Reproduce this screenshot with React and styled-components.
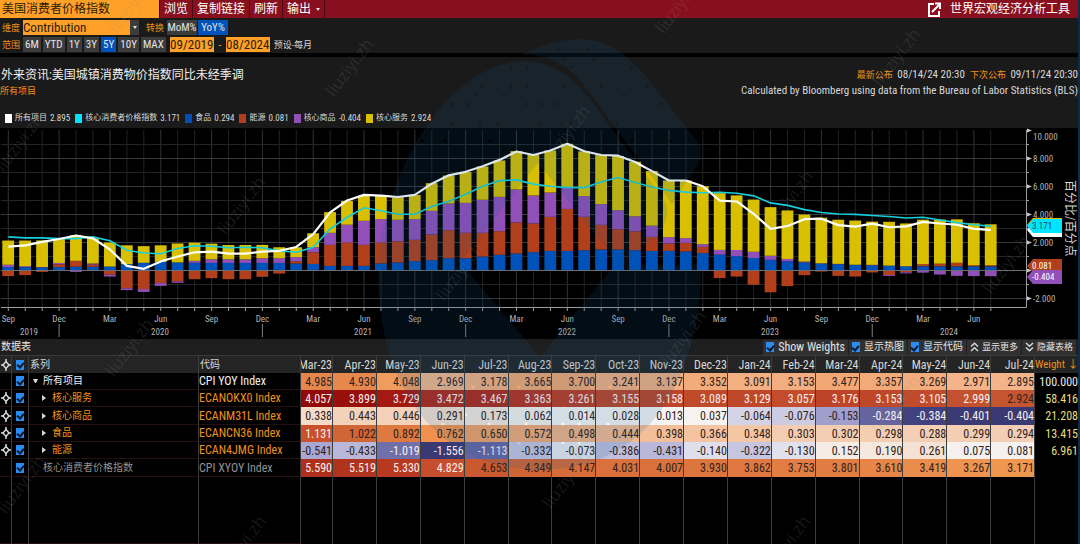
import { useState } from "react";
import styled, { createGlobalStyle } from "styled-components";

const latin = '"Roboto Condensed", Roboto, "Noto Sans CJK SC", sans-serif';

const GlobalStyle = createGlobalStyle`
  * {
    box-sizing: border-box;
  }
  body {
    margin: 0;
    background: #000;
    color: #d8d8d8;
    font-family: ${latin};
    font-size: 12px;
    line-height: 16px;
  }
  button, input, select {
    font-family: inherit;
    line-height: inherit;
    margin: 0;
  }
`;

const ranges = ["6M", "YTD", "1Y", "3Y", "5Y", "10Y", "MAX"];

const legend = [
  { name: "所有项目", value: "2.895", color: "#ffffff" },
  { name: "核心消费者价格指数", value: "3.171", color: "#00e5ff" },
  { name: "食品", value: "0.294", color: "#0050b8" },
  { name: "能源", value: "0.081", color: "#b23f1c" },
  { name: "核心商品", value: "-0.404", color: "#9050b8" },
  { name: "核心服务", value: "2.924", color: "#d8c000" },
];

// food, energy, core goods, core services
const stacks = [
  [0.24, -0.4, 0.17, 1.73], [0.24, -0.33, 0.06, 1.84], [0.22, -0.1, 0.03, 1.9], [0.24, 0.2, 0.1, 1.73],
  [0.27, 0.42, -0.1, 1.83], [0.27, 0.15, 0.08, 1.8], [0.28, -0.3, -0.13, 1.72], [0.45, -1.27, -0.13, 1.35],
  [0.55, -1.33, -0.2, 1.19], [0.62, -0.9, -0.2, 1.18], [0.58, -0.78, -0.1, 1.35], [0.55, -0.62, 0.14, 1.3],
  [0.54, -0.55, 0.26, 1.12], [0.54, -0.62, 0.26, 1.02], [0.54, -0.62, 0.26, 1.02], [0.54, -0.45, 0.34, 0.95],
  [0.54, -0.22, 0.34, 0.78], [0.5, 0.16, 0.3, 0.7], [0.47, 0.83, 0.36, 1.0], [0.33, 1.5, 0.86, 1.48],
  [0.33, 1.67, 1.27, 1.7], [0.33, 1.5, 1.72, 1.8], [0.5, 1.5, 1.67, 1.7], [0.57, 1.52, 1.53, 1.62],
  [0.67, 1.52, 1.48, 1.73], [0.74, 1.83, 1.69, 1.98], [0.88, 2.0, 1.9, 2.0], [0.88, 1.81, 2.14, 2.2],
  [1.0, 1.69, 2.36, 2.38], [1.12, 1.69, 2.45, 2.6], [1.21, 2.22, 2.36, 2.74], [1.31, 2.05, 2.0, 2.9],
  [1.4, 2.43, 1.74, 3.0], [1.4, 3.0, 1.5, 3.15], [1.45, 2.38, 1.48, 3.2], [1.5, 1.76, 1.48, 3.5],
  [1.5, 1.45, 1.36, 3.87], [1.45, 1.35, 1.07, 3.9], [1.4, 1.0, 0.8, 3.9], [1.4, 0.53, 0.45, 4.05],
  [1.36, 0.62, 0.33, 4.12], [1.24, 0.45, 0.19, 4.14],
  [1.131, -0.541, 0.338, 4.057], [1.022, -0.433, 0.443, 3.899], [0.892, -1.019, 0.446, 3.729],
  [0.762, -1.556, 0.291, 3.472], [0.65, -1.113, 0.173, 3.467], [0.572, -0.332, 0.062, 3.363],
  [0.498, -0.073, 0.014, 3.261], [0.444, -0.386, 0.028, 3.155], [0.398, -0.431, 0.013, 3.158],
  [0.366, -0.14, 0.037, 3.089], [0.348, -0.322, -0.064, 3.129], [0.303, -0.13, -0.076, 3.057],
  [0.302, 0.152, -0.153, 3.176], [0.298, 0.19, -0.284, 3.153], [0.288, 0.261, -0.384, 3.105],
  [0.299, 0.075, -0.401, 2.999], [0.294, 0.081, -0.404, 2.924],
];

const headline = [
  1.7, 1.8, 2.05, 2.25, 2.5, 2.3, 1.5, 0.33, 0.12, 0.65, 1.0, 1.3, 1.35, 1.2, 1.2, 1.35, 1.4, 1.68, 2.6,
  4.15, 5.0, 5.4, 5.35, 5.25, 5.4, 6.2, 6.8, 7.05, 7.45, 7.9, 8.5, 8.25, 8.57, 9.05, 8.52, 8.25, 8.2, 7.75,
  7.1, 6.43, 6.43, 6.02, 4.985, 4.93, 4.048, 2.969, 3.178, 3.665, 3.7, 3.241, 3.137, 3.352, 3.091, 3.153,
  3.477, 3.357, 3.269, 2.971, 2.895,
];

const core = [
  2.4, 2.33, 2.33, 2.28, 2.28, 2.4, 2.12, 1.45, 1.25, 1.2, 1.57, 1.77, 1.73, 1.63, 1.66, 1.62, 1.4, 1.3,
  1.66, 2.97, 3.8, 4.48, 4.27, 4.02, 4.02, 4.57, 4.95, 5.45, 6.02, 6.42, 6.47, 6.17, 6.02, 5.92, 5.92,
  6.32, 6.64, 6.28, 5.97, 5.72, 5.6, 5.55, 5.59, 5.519, 5.33, 4.829, 4.653, 4.349, 4.147, 4.031, 4.007,
  3.93, 3.862, 3.753, 3.801, 3.61, 3.419, 3.267, 3.171,
];

const months = [
  "Mar-23", "Apr-23", "May-23", "Jun-23", "Jul-23", "Aug-23", "Sep-23", "Oct-23", "Nov-23", "Dec-23",
  "Jan-24", "Feb-24", "Mar-24", "Apr-24", "May-24", "Jun-24", "Jul-24",
];

const rows = [
  {
    name: "所有项目", code: "CPI YOY Index", weight: "100.000", tone: "#f0f0f0", level: 0, mark: "down",
    values: "4.985 4.930 4.048 2.969 3.178 3.665 3.700 3.241 3.137 3.352 3.091 3.153 3.477 3.357 3.269 2.971 2.895",
    heat: "#e5864c #e6884d #f19c5f #f4b58c #f3b083 #f1a774 #f1a673 #f3ae80 #f3b083 #f2ac7b #f3b083 #f2ae80 #f2a875 #f2aa79 #f3ad7d #f4b388 #f4b48a",
    light: 0,
  },
  {
    name: "核心服务", code: "ECANOKX0 Index", weight: "58.416", tone: "#f0901c", level: 1, mark: "right", pin: true,
    values: "4.057 3.899 3.729 3.472 3.467 3.363 3.261 3.155 3.158 3.089 3.129 3.057 3.176 3.153 3.105 2.999 2.924",
    heat: "#900a0a #980f0c #a31a12 #b0281b #b0281b #b83220 #bd3d24 #be4528 #be4528 #c04b2a #bf482a #c24c2b #bd4428 #be4629 #c04a2a #c3502e #c55530",
    light: 16,
  },
  {
    name: "核心商品", code: "ECANM31L Index", weight: "21.208", tone: "#f0901c", level: 1, mark: "right", pin: true,
    values: "0.338 0.443 0.446 0.291 0.173 0.062 0.014 0.028 0.013 0.037 -0.064 -0.076 -0.153 -0.284 -0.384 -0.401 -0.404",
    heat: "#f5dcc8 #f3d2ba #f3d2b9 #f5e0d0 #f6e9df #f7f2ee #f7f6f5 #f7f5f4 #f5f4f4 #f5f2f0 #d3d2e6 #cccbe2 #a09fcb #65649f #424180 #3c3a75 #3b3974",
    light: 0,
  },
  {
    name: "食品", code: "ECANCN36 Index", weight: "13.415", tone: "#f0901c", level: 1, mark: "right", pin: true,
    values: "1.131 1.022 0.892 0.762 0.650 0.572 0.498 0.444 0.398 0.366 0.348 0.303 0.302 0.298 0.288 0.299 0.294",
    heat: "#c9502b #d06535 #de793f #f0924e #f1a066 #f2a977 #f3b387 #f3ba92 #f3bf9a #f3c3a2 #f3c6a6 #f3cdb2 #f3cdb2 #f3ceb3 #f4cfb5 #f3ceb3 #f3ceb4",
    light: 1,
  },
  {
    name: "能源", code: "ECAN4JMG Index", weight: "6.961", tone: "#f0901c", level: 1, mark: "right", pin: true,
    values: "-0.541 -0.433 -1.019 -1.556 -1.113 -0.332 -0.073 -0.386 -0.431 -0.140 -0.322 -0.130 0.152 0.190 0.261 0.075 0.081",
    heat: "#a9a8d2 #b9b8da #706fa9 #3b3974 #6665a3 #c6c5e1 #eaeaf1 #c0bfde #b9b8da #dfdfeb #c7c6e1 #e1e1ed #f4ece5 #f5e8de #f4e2d4 #f5f1ee #f5f1ee",
    light: 0,
  },
  {
    name: "核心消费者价格指数", code: "CPI XYOY Index", weight: "", tone: "#929292", level: 0,
    values: "5.590 5.519 5.330 4.829 4.653 4.349 4.147 4.031 4.007 3.930 3.862 3.753 3.801 3.610 3.419 3.267 3.171",
    heat: "#ae2f1b #b0331d #b83820 #c74e2c #cb5930 #d16435 #d76c39 #da713c #da713c #dc753e #df7941 #e27e44 #e17c43 #e68547 #ea8c4c #ee9350 #f0974f",
    light: 4,
  },
];

const whiteText = (row, i, value) => {
  if (i < row.light) return true;
  return row.level === 1 && (row.name === "核心商品" ? value < -0.2 : value < -1);
};

const toY = (v) => 142.5 - v * 14;
const toX = (i) => 8.3 + i * 16.94;
const barColors = ["#0052bb", "#b23f1c", "#9050b8", "#d8c000"];
const monthNames = ["Sep", "Dec", "Mar", "Jun"];
const linePoints = (list) => list.map((v, i) => `${toX(i)},${toY(v)}`).join(" ");

const Bars = () =>
  stacks.map((parts, i) => {
    let up = 0;
    let down = 0;
    return parts.map((v, k) => {
      const from = v >= 0 ? up : down;
      const to = from + v;
      if (v >= 0) up = to;
      else down = to;
      return (
        <rect
          key={`${i}-${k}`}
          x={toX(i) - 6}
          y={toY(Math.max(from, to))}
          width="11.8"
          height={Math.abs(v) * 14}
          fill={barColors[k]}
        />
      );
    });
  });

const Tag = ({ y, color, ink, label }) => (
  <g>
    <path d={`M1027 ${y}L1033 ${y - 7}H1062V${y + 7}H1033Z`} fill={color} />
    {label && <text x="1032" y={y + 3} fill={ink} fontSize="9">{label}</text>}
  </g>
);

const Chart = () => (
  <ChartSvg viewBox="0 0 1080 210" role="img">
    {stacks.map((_, i) => (
      <line key={i} x1={toX(i)} x2={toX(i)} y1="2" y2="179" stroke={i % 3 === 0 ? "#303334" : "#202223"} />
    ))}
    {[-2, -1, 0, 1, 2, 3, 4, 5, 6, 7, 8, 9].map((v) => (
      <line key={v} x1="1" x2="1026" y1={toY(v)} y2={toY(v)} stroke={v % 2 === 0 ? "#363939" : "#232525"} />
    ))}
    <Bars />
    <line x1="1" x2="1026" y1={toY(0)} y2={toY(0)} stroke="#6c7070" />
    <polyline points={linePoints(core)} fill="none" stroke="#14d0dc" strokeWidth="1.6" />
    <polyline points={linePoints(headline)} fill="none" stroke="#fff" strokeWidth="2.2" strokeLinejoin="round" />
    <path d="M1 179.5H1026.5V2" fill="none" stroke="#9c9c9c" />
    {stacks.map((_, i) => (
      <g key={i}>
        <line x1={toX(i)} x2={toX(i)} y1="180" y2="183" stroke="#9c9c9c" />
        {i % 3 === 0 && (
          <AxisText x={toX(i)} y="194" textAnchor="middle">{monthNames[(i / 3) % 4]}</AxisText>
        )}
      </g>
    ))}
    {[3, 15, 27, 39, 51].map((i) => (
      <line key={i} x1={toX(i)} x2={toX(i)} y1="196" y2="209" stroke="#808080" />
    ))}
    {[["2019", 29], ["2020", 160], ["2021", 363], ["2022", 567], ["2023", 770], ["2024", 949]].map(([year, x]) => (
      <AxisText key={year} x={x} y="207" textAnchor="middle">{year}</AxisText>
    ))}
    {[-2, 0, 2, 4, 6, 8, 10].map((v) => (
      <g key={v}>
        <path d={`M1027 ${toY(v) - 2}L1032 ${toY(v)}L1027 ${toY(v) + 2}Z`} fill="#c8c8c8" />
        {v !== 0 && (
          <AxisText x="1033" y={v === 10 ? toY(v) + 9 : toY(v) + 3}>{v.toFixed(3)}</AxisText>
        )}
      </g>
    ))}
    {[-1, 1, 3, 5, 7, 9].map((v) => (
      <line key={v} x1="1026" x2="1029" y1={toY(v)} y2={toY(v)} stroke="#9c9c9c" />
    ))}
    <Tag y={97} color="#d8c000" />
    <Tag y={102} color="#fff" />
    <Tag y={98} color="#00e5ff" ink="#17494e" label="3.171" />
    <Tag y={138} color="#b23f1c" ink="#fff" label="0.081" />
    <Tag y={149} color="#9050b8" ink="#fff" label="-0.404" />
    <SideText x="1066" y="52">百分比/百分点</SideText>
  </ChartSvg>
);

const Pin = () => (
  <svg width="10" height="12" viewBox="0 0 10 12" fill="none" stroke="#d8d8d8">
    <path d="M5 2.6L8 6L5 9.4L2 6Z" strokeWidth="1.5" />
    <path d="M5 0V3M5 9V12M0 6H2M8 6H10" strokeWidth="1.5" />
  </svg>
);

const Chevrons = ({ down }) => (
  <svg width="9" height="10" viewBox="0 0 9 10" fill="none" stroke="#d8d8d8" strokeWidth="1.5">
    {down ? <path d="M1 1L4.5 4.3L8 1M1 5.5L4.5 8.8L8 5.5" /> : <path d="M1 4.5L4.5 1.2L8 4.5M1 9L4.5 5.7L8 9" />}
  </svg>
);

const stamps = [
  [133, 5], [350, 68], [567, 135], [790, 200], [1007, 265], [680, 5], [897, 58], [20, 143], [242, 206],
  [460, 272], [683, 340], [897, 405], [130, 348], [567, 480], [787, 545], [22, 485], [243, 545],
];

const dots = [
  [558, 50], [588, 50], [565, 59], [594, 59], [571, 67], [631, 67], [511, 67], [527, 67], [482, 86], [511, 86],
  [527, 86], [564, 86], [601, 86], [647, 86], [475, 95], [504, 95], [624, 95], [452, 104], [468, 104],
  [527, 104], [542, 104], [557, 104], [661, 104], [452, 123], [480, 123], [498, 123], [541, 123], [571, 123],
  [617, 123], [422, 141], [445, 141], [490, 141], [572, 141], [632, 141], [670, 141],
];

const Watermark = () => (
  <Overlay viewBox="0 0 1080 544" aria-hidden="true">
    <mask id="holes">
      <rect width="1080" height="544" fill="#fff" />
      {dots.map(([x, y]) => (
        <g key={`${x}-${y}`}>
          <circle cx={x} cy={y} r="1.6" />
          <circle cx={1090 - x} cy={510 - y} r="1.6" />
        </g>
      ))}
    </mask>
    <g fill="#105890" fillOpacity="0.15" mask="url(#holes)">
      <path
        fillRule="evenodd"
        d="M378 270C383 170 450 61 525 61C570 63 588 96 618 137L664 200Q674 215 656 236L627 265H701C700 385 645 470 540 470C440 470 377 390 378 270ZM538 163L460 262L540 357L617 262Z"
      />
      <path d="M520 55C580 29 608 34 645 75L697 141Q705 152 698 164L672 204L585 87Q560 52 520 55Z" />
    </g>
    {stamps.map(([x, y]) => (
      <text key={`${x}-${y}`} transform={`translate(${x} ${y}) rotate(-53)`} textAnchor="middle" dy="5">
        liuziyi.zh
      </text>
    ))}
    <rect x="1078" width="2" height="544" fill="#0d2c48" />
  </Overlay>
);

const App = () => {
  const [range, setRange] = useState("5Y");
  const [change, setChange] = useState("YoY%");

  return (
    <Page>
      <GlobalStyle />
      <TopBar>
        <TitleInput aria-label="指数" defaultValue="美国消费者价格指数" />
        <MenuButton>浏览</MenuButton>
        <MenuButton>复制链接</MenuButton>
        <MenuButton>刷新</MenuButton>
        <MenuButton>输出 <Caret /></MenuButton>
        <ToolLink href="#tool">
          <svg width="13" height="15" viewBox="0 0 13 15" fill="none" stroke="#fff" strokeWidth="2">
            <path d="M6 2H1V14H11V9" />
            <path d="M4 10L11 3M7 1.5H12V7" />
          </svg>
          世界宏观经济分析工具
        </ToolLink>
      </TopBar>
      <Controls>
        <Dimension>
          <Label htmlFor="dimension">维度</Label>
          <SelectBox>
            <select id="dimension">
              <option>Contribution</option>
            </select>
            <Arrow><Caret /></Arrow>
          </SelectBox>
          <Label as="span">转换</Label>
          <Group>
            {["MoM%", "YoY%"].map((item) => (
              <Toggle key={item} $active={item === change} onClick={() => setChange(item)}>{item}</Toggle>
            ))}
          </Group>
        </Dimension>
        <Dimension>
          <Label as="span">范围</Label>
          <RangeGroup>
            {ranges.map((item) => (
              <Toggle key={item} $active={item === range} onClick={() => setRange(item)}>{item}</Toggle>
            ))}
          </RangeGroup>
          <DateInput aria-label="开始" defaultValue="09/2019" />
          <Dash>-</Dash>
          <DateInput aria-label="结束" defaultValue="08/2024" />
          <Preset>预设-每月</Preset>
        </Dimension>
      </Controls>
      <ChartHead>
        <HeadRow>
          <div>
            <h1>外来资讯:美国城镇消费物价指数同比未经季调</h1>
            <Sub>所有项目</Sub>
          </div>
          <Release>
            <p><Orange>最新公布</Orange> 08/14/24 20:30 &nbsp;<Orange>下次公布</Orange> 09/11/24 20:30</p>
            <p>Calculated by Bloomberg using data from the Bureau of Labor Statistics (BLS)</p>
          </Release>
        </HeadRow>
        <Legend>
          {legend.map((item) => (
            <li key={item.name}>
              <Swatch $color={item.color} />
              {item.name}
              <b>{item.value}</b>
            </li>
          ))}
        </Legend>
      </ChartHead>
      <Chart />
      <TableBar>
        <h2>数据表</h2>
        <Option $latin><Check type="checkbox" defaultChecked />Show Weights</Option>
        <Option><Check type="checkbox" defaultChecked />显示热图</Option>
        <Option><Check type="checkbox" defaultChecked />显示代码</Option>
        <BarButton><Chevrons />显示更多</BarButton>
        <BarButton><Chevrons down />隐藏表格</BarButton>
      </TableBar>
      <Table>
        <colgroup>
          <Col $w={12} />
          <Col $w={17} />
          <Col $w={170} />
          <Col $w={102} />
          <Col $w={32} />
          {months.slice(1).map((m) => <col key={m} />)}
          <Col $w={45} />
        </colgroup>
        <thead>
          <tr>
            <th><Center><Pin /></Center></th>
            <th><Center><Check type="checkbox" aria-label="全部" defaultChecked /></Center></th>
            <NameHead>系列</NameHead>
            <NameHead>代码</NameHead>
            {months.map((m) => <th key={m}><Clip>{m}</Clip></th>)}
            <WeightHead>Weight ↓</WeightHead>
          </tr>
        </thead>
        <tbody>
          {rows.map((row) => {
            const heat = row.heat.split(" ");
            return (
              <tr key={row.code}>
                <td>{row.pin && <Center><Pin /></Center>}</td>
                <td><Center><Check type="checkbox" aria-label={row.name} defaultChecked /></Center></td>
                <td>
                  <Series $tone={row.tone} $level={row.level}>
                    <Mark $dir={row.mark} />
                    {row.name}
                  </Series>
                </td>
                <Code $tone={row.tone}>{row.code}</Code>
                {row.values.split(" ").map((v, i) => (
                  <Heat key={months[i]} $bg={heat[i]} $white={whiteText(row, i, Number(v))}>
                    <Clip>{v}</Clip>
                  </Heat>
                ))}
                <Weight $first={row.weight === "100.000"}>{row.weight}</Weight>
              </tr>
            );
          })}
          <FillRow>
            <td /><td /><td /><td />
            {months.map((m) => <td key={m} />)}
            <td />
          </FillRow>
        </tbody>
      </Table>
      <Watermark />
    </Page>
  );
};

const Page = styled.main`
  position: relative;
  min-height: 100vh;
  overflow: hidden;
`;

const TopBar = styled.header`
  display: flex;
  height: 19px;
  background: #870f1e;
  border-bottom: 1px solid #1a1a1a;
`;

const TitleInput = styled.input`
  width: 160px;
  padding: 0 2px;
  border: none;
  border-right: 1px solid #3a0a10;
  background: #ffa028;
  color: #2a1c08;
  font-size: 12px;
`;

const MenuButton = styled.button`
  display: flex;
  align-items: center;
  gap: 5px;
  padding: 0 4px;
  border: none;
  border-right: 1px solid #4a0a14;
  background: transparent;
  color: #fff;
  font-size: 12px;
`;

const Caret = styled.i`
  border: 2px solid transparent;
  border-top: 3px solid #e0e0e0;
  border-bottom: none;
`;

const ToolLink = styled.a`
  display: flex;
  align-items: center;
  gap: 9px;
  margin-left: auto;
  padding-right: 10px;
  color: #fff;
  font-size: 12px;
  text-decoration: none;
`;

const Controls = styled.section`
  height: 38px;
  background: #1a1a1a;
  border-bottom: 4px solid #000;
`;

const Dimension = styled.div`
  display: flex;
  align-items: center;
  height: 17px;
  padding-left: 2px;
`;

const Label = styled.label`
  width: 21px;
  color: #f0901c;
  font-size: 9px;
`;

const SelectBox = styled.div`
  display: flex;
  margin-right: 7px;

  select {
    width: 107px;
    height: 15px;
    padding: 0;
    border: none;
    border-radius: 0;
    appearance: none;
    background: #ffa028;
    color: #2a1c08;
    font-size: 13px;
    line-height: 15px;
  }
`;

const Arrow = styled.span`
  display: flex;
  align-items: center;
  justify-content: center;
  width: 9px;
  background: #3c3c3c;
`;

const Group = styled.div`
  display: flex;
  gap: 1px;

  button {
    width: 30px;
    padding: 0;
  }
`;

const RangeGroup = styled.div`
  display: flex;
  gap: 2px;
  margin-right: 4px;
`;

const Toggle = styled.button`
  height: 15px;
  padding: 0 2px;
  border: none;
  background: ${({ $active }) => ($active ? "#0052bb" : "#3c3c3c")};
  color: #e4e4e4;
  font-size: 11px;
  line-height: 15px;
`;

const DateInput = styled.input`
  width: 44px;
  height: 15px;
  padding: 0;
  border: none;
  background: #ffa028;
  color: #2a1c08;
  font-size: 13px;
  text-align: center;
`;

const Dash = styled.span`
  width: 12px;
  color: #f0901c;
  text-align: center;
`;

const Preset = styled.span`
  margin-left: 4px;
  font-size: 9px;
`;

const ChartHead = styled.section`
  height: 71px;
  padding-top: 10px;
  background: #1a1a1a;
`;

const HeadRow = styled.div`
  display: flex;
  justify-content: space-between;
  height: 43px;

  h1 {
    margin: 0;
    padding-left: 1px;
    color: #f0f0f0;
    font-size: 12px;
    font-weight: 400;
  }
`;

const Sub = styled.div`
  color: #f0901c;
  font-size: 9px;
`;

const Release = styled.div`
  padding-right: 2px;
  font-size: 11px;
  text-align: right;

  p {
    margin: 0;
  }
`;

const Orange = styled.span`
  margin-right: 2px;
  color: #f0901c;
  font-size: 9px;
`;

const Legend = styled.ul`
  display: flex;
  gap: 5px;
  margin: 0;
  padding: 0 5px;
  list-style: none;
  font-size: 8px;

  li {
    display: flex;
    align-items: center;
    gap: 3px;
  }

  b {
    font-size: 9px;
    font-weight: 400;
  }
`;

const Swatch = styled.i`
  width: 7px;
  height: 9px;
  background: ${({ $color }) => $color};
`;

const ChartSvg = styled.svg`
  display: block;
  width: 100%;
  background: #000;
`;

const AxisText = styled.text`
  fill: #b4b4b4;
  font-size: 9px;
`;

const SideText = styled.text`
  fill: #d8d8d8;
  font-size: 12px;
  writing-mode: vertical-rl;
  text-orientation: sideways;
`;

const TableBar = styled.div`
  display: flex;
  align-items: center;
  gap: 1px;
  height: 18px;
  padding-right: 4px;
  background: #1e1e1e;
  border-top: 1px solid #000;
  border-bottom: 1px solid #3a3a3a;

  h2 {
    margin: 0 auto 0 1px;
    color: #e8e8e8;
    font-size: 10px;
    font-weight: 400;
  }
`;

const Option = styled.label`
  display: flex;
  align-items: center;
  gap: 4px;
  height: 15px;
  padding: 0 3px;
  background: #303030;
  color: #e4e4e4;
  font-size: ${({ $latin }) => ($latin ? "12px" : "10px")};
`;

const BarButton = styled.button`
  display: flex;
  align-items: center;
  gap: 3px;
  height: 15px;
  padding: 0 3px;
  border: none;
  background: #303030;
  color: #e4e4e4;
  font-size: 9px;
`;

const Check = styled.input`
  display: grid;
  place-items: center;
  width: 8px;
  height: 10px;
  appearance: none;
  background: #2a8cf0;

  &:checked::after {
    content: "";
    width: 3px;
    height: 5px;
    border: solid #04182c;
    border-width: 0 2px 2px 0;
    transform: rotate(40deg);
  }
`;

const Table = styled.table`
  width: 100%;
  table-layout: fixed;
  border-collapse: separate;
  border-spacing: 0;

  th, td {
    height: 17px;
    padding: 0;
    border-right: 1px solid #3c3c3c;
    font-weight: 400;
    line-height: 16px;
    white-space: nowrap;
  }

  th {
    background: #242424;
  }

  tbody tr:nth-child(3n) td {
    height: 18px;
  }

  tbody td:nth-child(-n + 4) {
    border-bottom: 1px solid #241010;
  }

  th:last-child, td:last-child {
    border-right: none;
  }
`;

const Col = styled.col`
  width: ${({ $w }) => $w}px;
`;

const Center = styled.div`
  display: flex;
  align-items: center;
  justify-content: center;
`;

const Clip = styled.div`
  display: flex;
  justify-content: flex-end;
  overflow: hidden;
`;

const NameHead = styled.th`
  padding-left: 1px !important;
  font-size: 10px;
  text-align: left;
`;

const WeightHead = styled.th`
  padding-right: 2px !important;
  color: #f0901c;
  font-size: 11px;
  text-align: right;
`;

const Series = styled.div`
  display: flex;
  align-items: center;
  gap: 5px;
  padding-left: ${({ $level }) => ($level ? 13 : 4)}px;
  color: ${({ $tone }) => $tone};
  font-size: 10px;
`;

const Mark = styled.i`
  width: 5px;
  border: ${({ $dir }) => ($dir === "right" ? "3px" : "2px")} solid transparent;
  border-width: ${({ $dir }) => ($dir === "right" ? "3px 0 3px 4px" : "4px 2px 0 2px")};
  ${({ $dir }) => $dir === "right" && "border-left-color: #d8d8d8;"}
  ${({ $dir }) => $dir === "down" && "border-top-color: #d8d8d8;"}
`;

const Code = styled.td`
  color: ${({ $tone }) => $tone};
`;

const Heat = styled.td`
  background: ${({ $bg }) => $bg};
  color: ${({ $white }) => ($white ? "#f8f0f0" : "#30221c")};
`;

const Weight = styled.td`
  padding-right: 2px !important;
  color: ${({ $first }) => ($first ? "#e8e8e8" : "#e6de7c")};
  text-align: right;
`;

const FillRow = styled.tr`
  && td {
    height: 67px;
    border-bottom: none;
  }
`;

const Overlay = styled.svg`
  position: absolute;
  top: 0;
  left: 0;
  width: 100%;
  pointer-events: none;

  text {
    fill: #909090;
    fill-opacity: 0.18;
    font-family: "Open Sans", sans-serif;
    font-size: 17px;
  }
`;

export default App;
